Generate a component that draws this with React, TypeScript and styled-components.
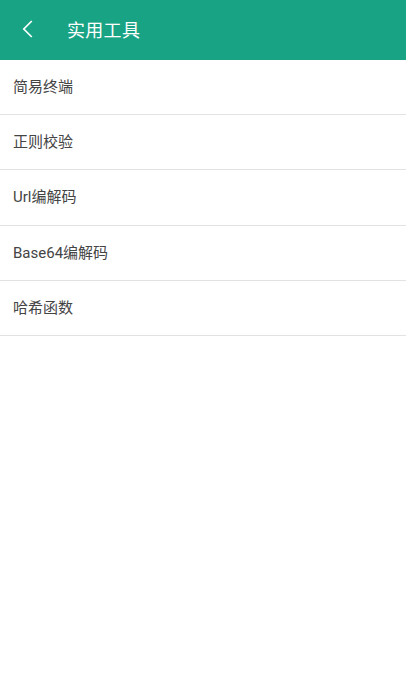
import styled, { createGlobalStyle } from 'styled-components';

const GlobalStyle = createGlobalStyle`
  html, body {
    margin: 0;
    padding: 0;
    background: #ffffff;
    font-family: Roboto, "Noto Sans CJK SC", sans-serif;
  }
`;

const Page = styled.div`
  width: 100%;
  min-height: 700px;
  background: #ffffff;
`;

const Header = styled.header`
  height: 60px;
  background: #19a385;
  display: flex;
  align-items: center;
  color: #ffffff;
`;

const BackButton = styled.button`
  width: 56px;
  height: 58px;
  border: 0;
  padding: 0 0 2px 22px;
  background: transparent;
  display: flex;
  align-items: center;
  cursor: pointer;
`;

const Title = styled.h1`
  margin: 0 0 3px 11px;
  font-size: 18px;
  font-weight: 400;
  letter-spacing: 0.3px;
`;

const List = styled.ul`
  list-style: none;
  margin: 0;
  padding: 0;
`;

const Item = styled.li`
  height: 55.2px;
  box-sizing: border-box;
  display: flex;
  align-items: center;
  padding: 0 0 3px 13px;
  font-size: 15px;
  color: #444444;
  border-bottom: 1px solid #e2e2e2;
`;

const tools = ['简易终端', '正则校验', 'Url编解码', 'Base64编解码', '哈希函数'];

const App = () => (
  <Page>
    <GlobalStyle />
    <Header>
      <BackButton aria-label="back">
        <svg width="11" height="18" viewBox="0 0 11 18">
          <path d="M9.8 1 L1.8 9 L9.8 17" fill="none" stroke="#fff" strokeWidth="1.7" />
        </svg>
      </BackButton>
      <Title>实用工具</Title>
    </Header>
    <List>
      {tools.map((t) => (
        <Item key={t}>{t}</Item>
      ))}
    </List>
  </Page>
);

export default App;
